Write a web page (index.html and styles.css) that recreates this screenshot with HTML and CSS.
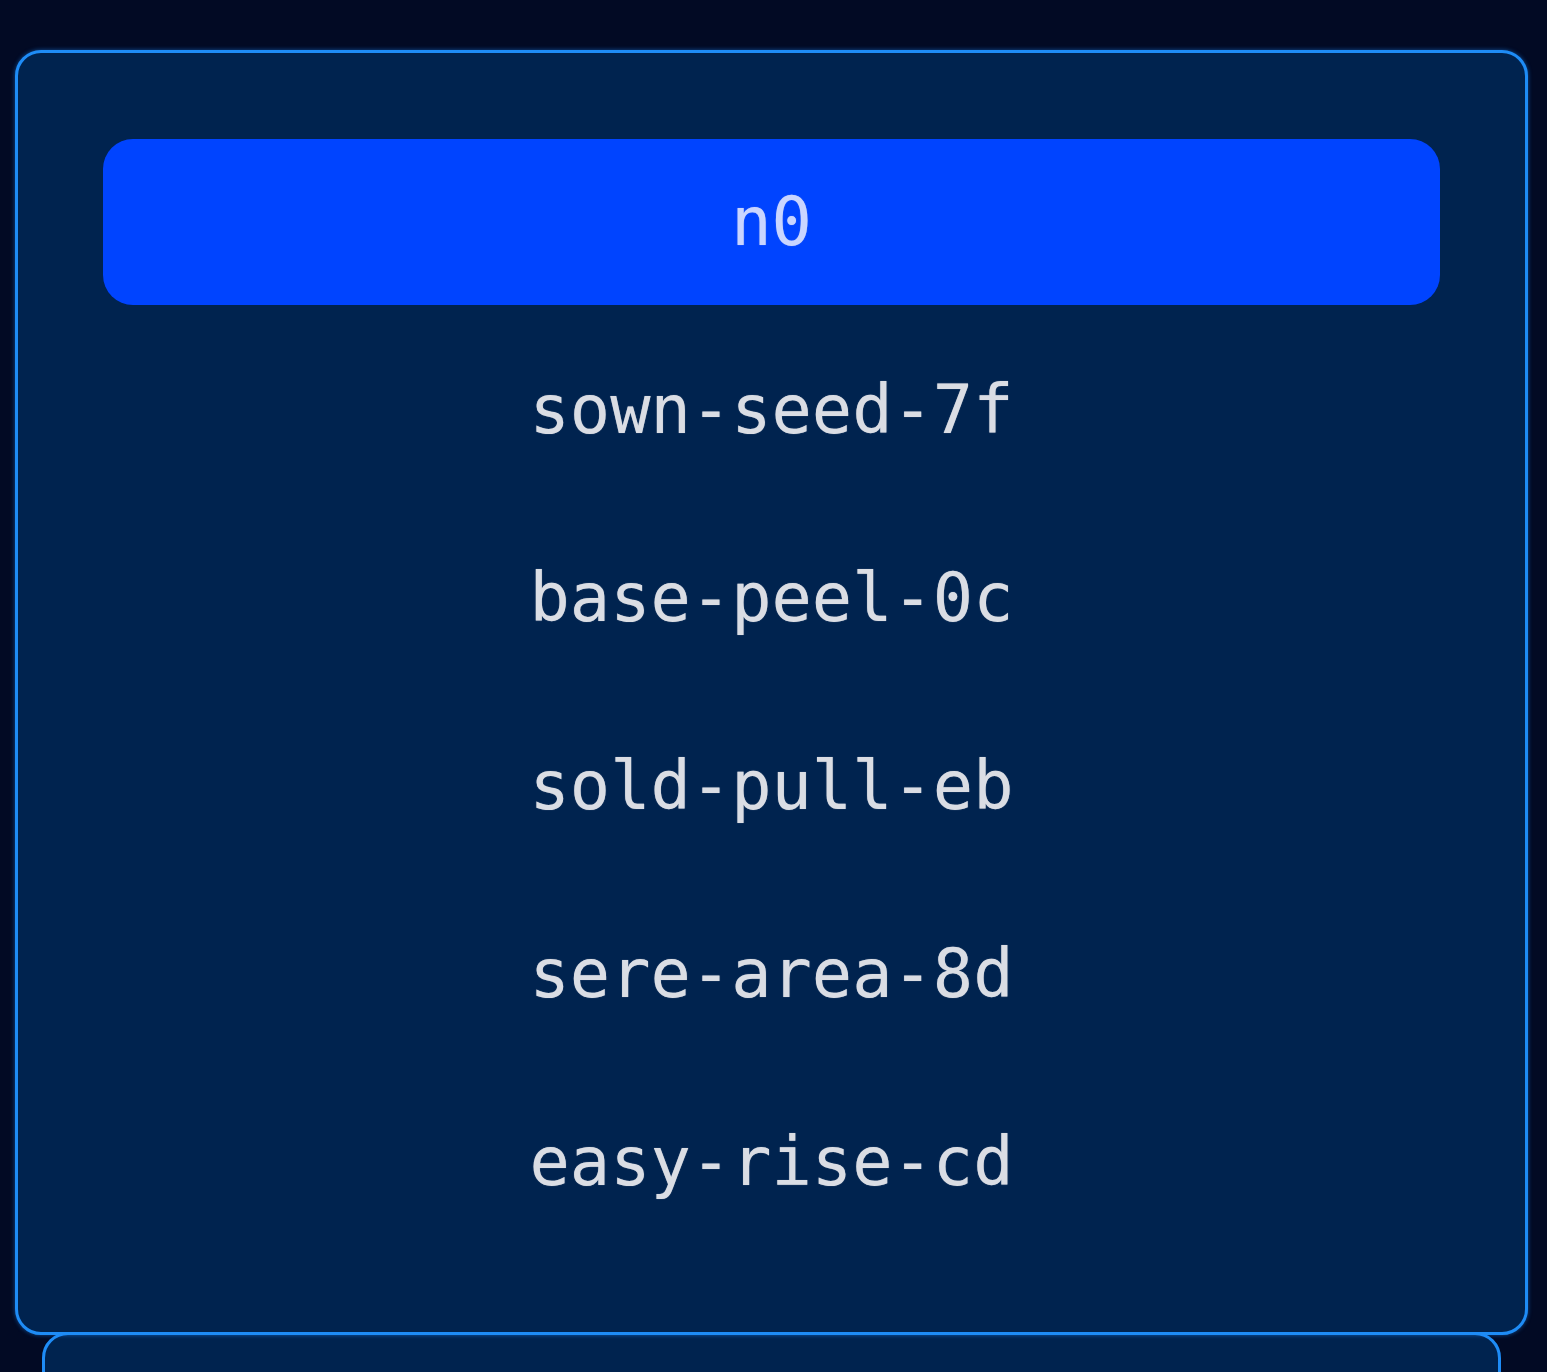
FILE: index.html
```html
<!DOCTYPE html>
<html lang="en">
<head>
    <meta charset="UTF-8">
    <meta name="viewport" content="width=device-width, initial-scale=1.0">
    <title>Branch Picker</title>
    <link rel="stylesheet" href="styles.css">
</head>
<body>
    <div class="picker">
        <ul class="branch-list">
            <li class="branch selected">n0</li>
            <li class="branch">sown-seed-7f</li>
            <li class="branch">base-peel-0c</li>
            <li class="branch">sold-pull-eb</li>
            <li class="branch">sere-area-8d</li>
            <li class="branch">easy-rise-cd</li>
        </ul>
    </div>
    <div class="picker-next"></div>
</body>
</html>
```

FILE: styles.css
```css
/* Branch picker */
html, body {
    height: 100%;
}

body {
    margin: 0;
    padding: 50px 19px 0 15px;
    box-sizing: border-box;
    background-color: #020a24;
    font-family: "DejaVu Sans Mono", "Liberation Mono", monospace;
    overflow: hidden;
}

.picker {
    position: relative;
    z-index: 1;
    background-color: #00234f;
    border: 3px solid #1e8cf6;
    border-radius: 26px;
    padding: 86px 85px 87px;
    box-shadow: 0 0 4px rgba(30, 140, 255, 0.55);
}

.branch-list {
    list-style: none;
    margin: 0;
    padding: 0;
    display: flex;
    flex-direction: column;
    gap: 22px;
}

.branch {
    height: 166px;
    display: flex;
    align-items: center;
    justify-content: center;
    font-size: 67px;
    color: #dadde4;
    text-shadow: 0 0 1px rgba(218, 221, 228, 0.6);
    border-radius: 30px;
}

.branch.selected {
    background-color: #0044ff;
    color: #c9d5ff;
}

/* next card peeking out below */
.picker-next {
    margin: -3px 27px 0;
    height: 60px;
    background-color: #00234f;
    border: 3px solid #1e8cf6;
    border-radius: 26px;
}
```
